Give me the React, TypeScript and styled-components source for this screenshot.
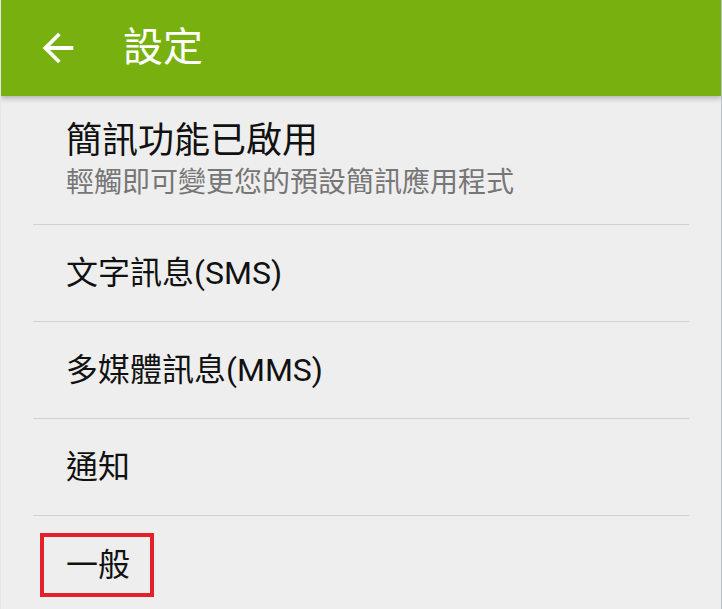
import React from "react";
import styled, { createGlobalStyle } from "styled-components";

const GlobalStyle = createGlobalStyle`
  html, body {
    margin: 0;
    padding: 0;
    background: #eeeeee;
  }
  body {
    font-family: Roboto, "Noto Sans CJK TC", "Noto Sans", sans-serif;
  }
`;

const Screen = styled.div`
  min-height: 609px;
  background: #eeeeee;
  border-left: 1px solid #e2e5ea;
  border-right: 1px solid #b8c0c9;
  box-sizing: border-box;
  overflow: hidden;
`;

const AppBar = styled.header`
  position: relative;
  z-index: 1;
  display: flex;
  align-items: center;
  height: 96px;
  margin-left: -1px;
  margin-right: -1px;
  padding-left: 35px;
  background: #78b10f;
  box-shadow: 0 2px 6px rgba(0, 0, 0, 0.28);
`;

const BackButton = styled.button`
  display: flex;
  border: 0;
  padding: 0;
  background: none;
  color: #ffffff;
  margin-top: -1px;
`;

const Title = styled.h1`
  margin: 0 0 0 42px;
  font-size: 40px;
  font-weight: 400;
  line-height: 1;
  color: #ffffff;
`;

const List = styled.div`
  padding: 0 32px;
`;

const Item = styled.div<{ $tall?: boolean }>`
  display: flex;
  flex-direction: column;
  justify-content: ${(p) => (p.$tall ? "flex-start" : "center")};
  height: ${(p) => (p.$tall ? "129px" : "97px")};
  padding-left: 33px;
  padding-top: ${(p) => (p.$tall ? "25px" : "0")};
  box-sizing: border-box;
  border-bottom: 1px solid #d2d2d2;

  &:last-child {
    border-bottom: 0;
  }
`;

const Label = styled.div<{ $big?: boolean }>`
  font-size: ${(p) => (p.$big ? "36px" : "32px")};
  line-height: 40px;
  color: #111111;
`;

const Summary = styled.div`
  margin-top: 4px;
  font-size: 28px;
  line-height: 36px;
  color: #767676;
`;

const Highlight = styled.span`
  display: inline-block;
  margin-left: -26px;
  padding: 8px 20px 8px 22px;
  border: 4px solid #e3212b;
`;

const ArrowBack = () => (
  <svg width="46" height="46" viewBox="0 0 24 24" fill="currentColor">
    <path d="M20 11H7.83l5.59-5.59L12 4l-8 8 8 8 1.41-1.41L7.83 13H20v-2z" />
  </svg>
);

const items = ["文字訊息(SMS)", "多媒體訊息(MMS)", "通知"];

export default function App() {
  return (
    <Screen>
      <GlobalStyle />
      <AppBar>
        <BackButton aria-label="back">
          <ArrowBack />
        </BackButton>
        <Title>設定</Title>
      </AppBar>
      <List>
        <Item $tall>
          <Label $big>簡訊功能已啟用</Label>
          <Summary>輕觸即可變更您的預設簡訊應用程式</Summary>
        </Item>
        {items.map((text) => (
          <Item key={text}>
            <Label>{text}</Label>
          </Item>
        ))}
        <Item>
          <Label>
            <Highlight>一般</Highlight>
          </Label>
        </Item>
      </List>
    </Screen>
  );
}
